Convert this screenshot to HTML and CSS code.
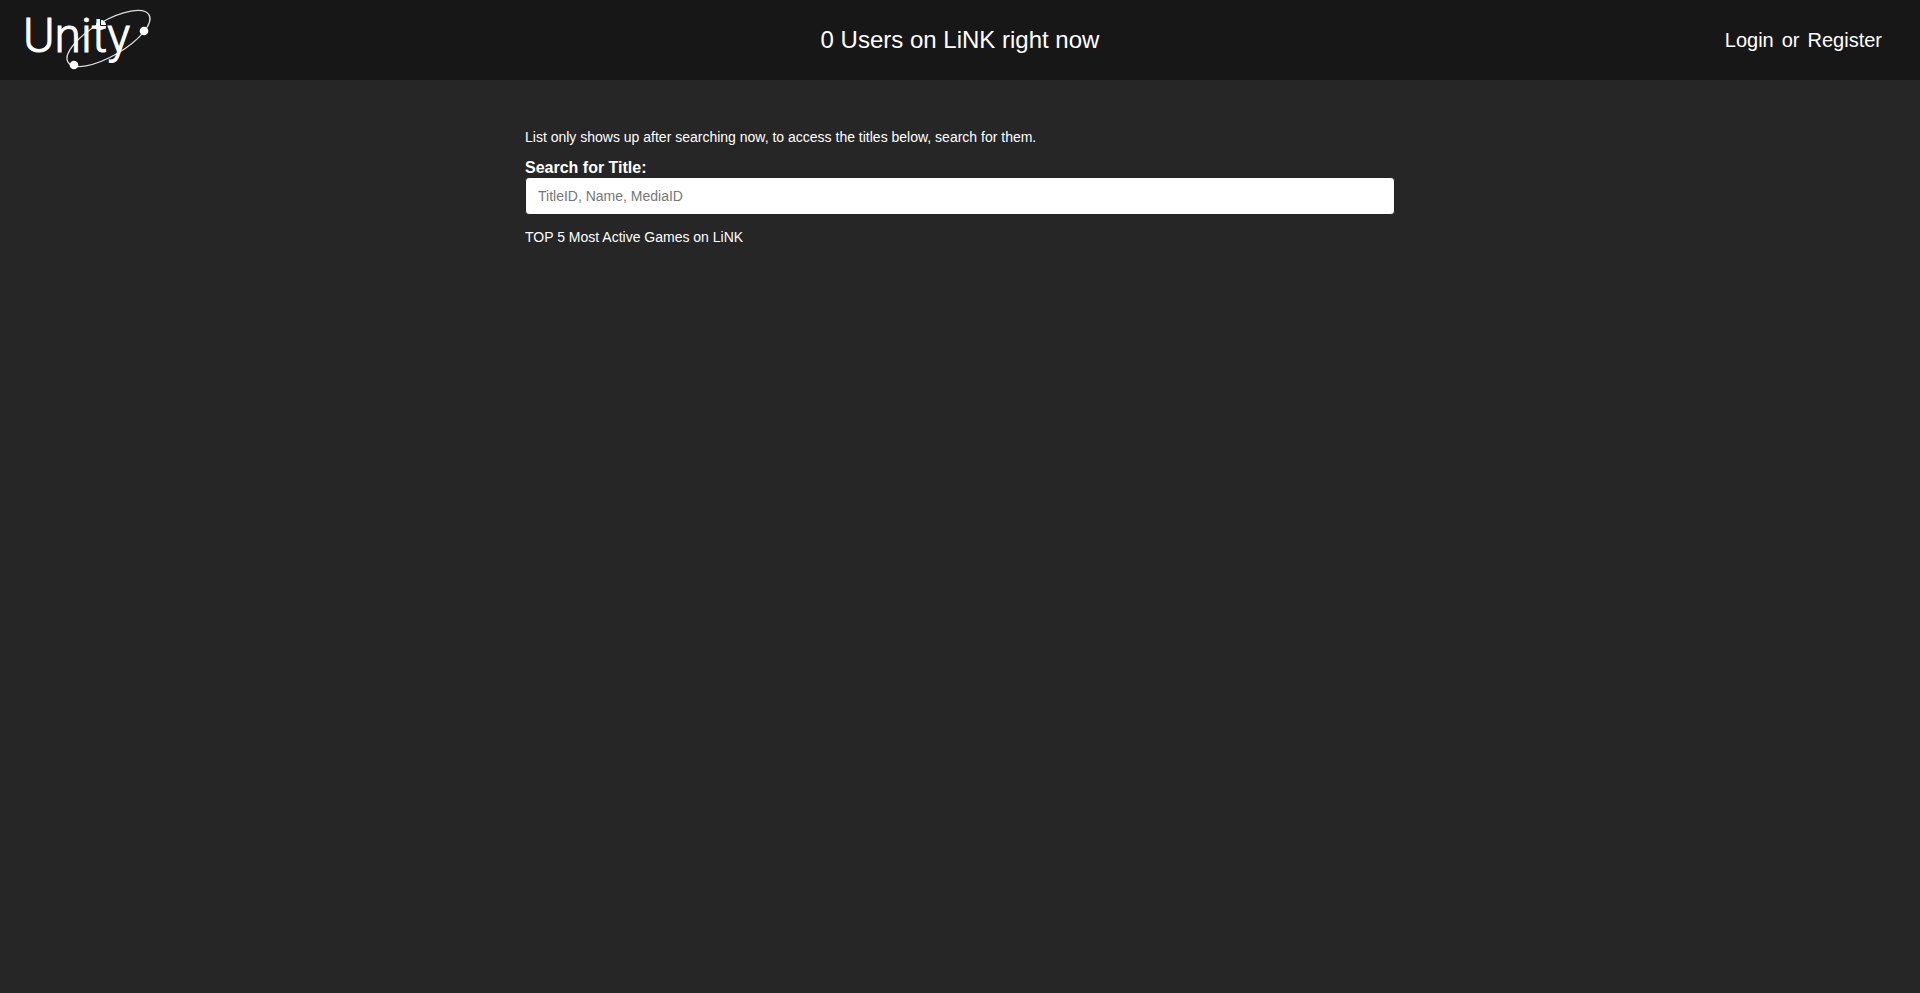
FILE: index.html
```html
<!DOCTYPE html>
<html lang="en">
<head>
  <meta charset="UTF-8" />
  <meta name="viewport" content="width=device-width, initial-scale=1.0" />
  <title>Unity</title>
  <link rel="stylesheet" href="styles.css">
</head>
<body>

  <header class="header">
    <a class="logo" href="#" aria-label="Unity">
      <svg width="160" height="80" viewBox="0 0 160 80">
        <ellipse class="orbit" cx="108.5" cy="38.5" rx="46.9" ry="17.4" transform="rotate(-30.2 108.5 38.5)" />
        <circle cx="101" cy="25" r="5" />
        <text class="logo-text" x="23" y="52">Unity</text>
        <path class="cut" d="M100.5 19v6.5H107" />
        <circle cx="144" cy="31" r="4.3" />
        <circle cx="74" cy="65" r="4.3" />
      </svg>
    </a>
    <div class="user-count">0 Users on LiNK right now</div>
    <nav class="account">
      <a href="#">Login</a>
      <span>or</span>
      <a href="#">Register</a>
    </nav>
  </header>

  <main class="container">
    <p>List only shows up after searching now, to access the titles below, search for them.</p>
    <form class="search">
      <label for="title-search">Search for Title:</label>
      <input type="text" id="title-search" placeholder="TitleID, Name, MediaID" />
    </form>
    <p>TOP 5 Most Active Games on LiNK</p>
  </main>

</body>
</html>
```
FILE: styles.css
```css
* {
  box-sizing: border-box;
}

body {
  margin: 0;
  font-family: "Liberation Sans", Arial, sans-serif;
  font-size: 14px;
  line-height: 20px;
  color: white;
  background-color: #262626;
}

.header {
  display: grid;
  grid-template-columns: 1fr auto 1fr;
  align-items: center;
  height: 80px;
  background-color: #171717;
}

.logo {
  justify-self: start;
  height: 80px;
}

.logo svg {
  display: block;
  fill: white;
}

.logo-text {
  font-family: Roboto, sans-serif;
  font-size: 48px;
  font-weight: 300;
  stroke: white;
  stroke-width: 1;
}

.orbit {
  fill: none;
  stroke: #ddd;
  stroke-width: 1.3;
}

.cut {
  fill: none;
  stroke: #171717;
}

.user-count {
  font-size: 24px;
  line-height: 32px;
}

.account {
  display: flex;
  justify-content: flex-end;
  gap: 8px;
  padding-right: 38px;
  font-size: 20px;
  line-height: 28px;
}

.account a {
  color: white;
  text-decoration: none;
}

.account a:hover {
  text-decoration: underline;
}

.container {
  max-width: 870px;
  margin: 0 auto;
  padding-top: 47px;
}

.container p {
  margin: 0 0 12px;
}

.search {
  margin-bottom: 12px;
}

.search label {
  display: block;
  font-size: 16px;
  line-height: 18px;
  font-weight: bold;
}

.search input {
  display: block;
  width: 100%;
  height: 38px;
  padding: 8px 12px;
  border: 1px solid #222;
  border-radius: 4px;
  background-color: white;
  font-family: inherit;
  font-size: 14px;
  color: #333;
}

.search input::placeholder {
  color: #777;
}
```
